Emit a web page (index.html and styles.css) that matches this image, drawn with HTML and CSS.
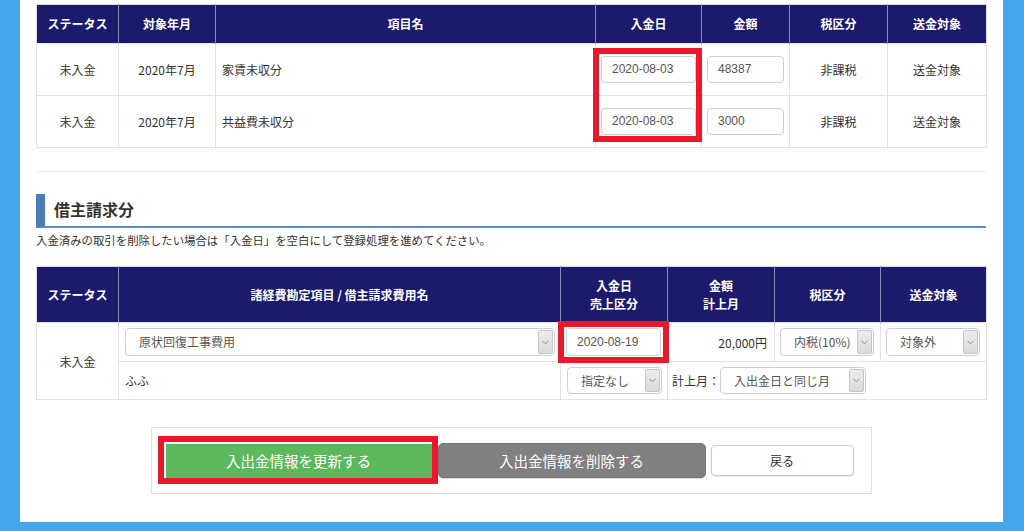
FILE: index.html
```html
<!DOCTYPE html>
<html lang="ja">
<head>
<meta charset="utf-8">
<title>入出金情報</title>
<link rel="stylesheet" href="styles.css">
</head>
<body>
<div class="panel">
  <div class="content">
    <table class="grid grid-top">
      <colgroup>
        <col class="c82"><col class="c97"><col class="c380"><col class="c106"><col class="c88"><col class="c98"><col class="c99">
      </colgroup>
      <thead>
        <tr><th>ステータス</th><th>対象年月</th><th>項目名</th><th>入金日</th><th>金額</th><th>税区分</th><th>送金対象</th></tr>
      </thead>
      <tbody>
        <tr>
          <td class="center">未入金</td>
          <td class="center">2020年7月</td>
          <td class="left">家賃未収分</td>
          <td class="pad5"><div class="field">2020-08-03</div></td>
          <td class="pad5"><div class="field">48387</div></td>
          <td class="center">非課税</td>
          <td class="center">送金対象</td>
        </tr>
        <tr>
          <td class="center">未入金</td>
          <td class="center">2020年7月</td>
          <td class="left">共益費未収分</td>
          <td class="pad5"><div class="field">2020-08-03</div></td>
          <td class="pad5"><div class="field">3000</div></td>
          <td class="center">非課税</td>
          <td class="center">送金対象</td>
        </tr>
      </tbody>
    </table>

    <div class="divider"></div>

    <h2 class="section-title">借主請求分</h2>
    <p class="note">入金済みの取引を削除したい場合は「入金日」を空白にして登録処理を進めてください。</p>

    <table class="grid grid-bottom">
      <colgroup>
        <col class="c82"><col class="c442"><col class="c107"><col class="c107"><col class="c106"><col class="c106">
      </colgroup>
      <thead>
        <tr><th>ステータス</th><th>諸経費勘定項目 / 借主請求費用名</th><th>入金日<br>売上区分</th><th>金額<br>計上月</th><th>税区分</th><th>送金対象</th></tr>
      </thead>
      <tbody>
        <tr class="r1">
          <td class="center" rowspan="2">未入金</td>
          <td class="pad-sel"><div class="sel"><span class="sel-text">原状回復工事費用</span><span class="sel-arrow"><svg width="7" height="5" viewBox="0 0 7 5"><polyline points="0.5,0.8 3.5,3.8 6.5,0.8" fill="none" stroke="#8a8a8a" stroke-width="1"/></svg></span></div></td>
          <td class="pad-sel"><div class="field tall">2020-08-19</div></td>
          <td class="right">20,000円</td>
          <td class="pad-sel"><div class="sel"><span class="sel-text">内税(10%)</span><span class="sel-arrow"><svg width="7" height="5" viewBox="0 0 7 5"><polyline points="0.5,0.8 3.5,3.8 6.5,0.8" fill="none" stroke="#8a8a8a" stroke-width="1"/></svg></span></div></td>
          <td class="pad-sel"><div class="sel"><span class="sel-text">対象外</span><span class="sel-arrow"><svg width="7" height="5" viewBox="0 0 7 5"><polyline points="0.5,0.8 3.5,3.8 6.5,0.8" fill="none" stroke="#8a8a8a" stroke-width="1"/></svg></span></div></td>
        </tr>
        <tr class="r2">
          <td class="left">ふふ</td>
          <td class="pad-sel"><div class="sel short"><span class="sel-text">指定なし</span><span class="sel-arrow"><svg width="7" height="5" viewBox="0 0 7 5"><polyline points="0.5,0.8 3.5,3.8 6.5,0.8" fill="none" stroke="#8a8a8a" stroke-width="1"/></svg></span></div></td>
          <td colspan="3" class="month-cell">
            <div class="month-row">
              <span class="month-label">計上月：</span>
              <div class="sel short month-sel"><span class="sel-text">入出金日と同じ月</span><span class="sel-arrow"><svg width="7" height="5" viewBox="0 0 7 5"><polyline points="0.5,0.8 3.5,3.8 6.5,0.8" fill="none" stroke="#8a8a8a" stroke-width="1"/></svg></span></div>
            </div>
          </td>
        </tr>
      </tbody>
    </table>

    <div class="actions">
      <button class="btn btn-update" type="button">入出金情報を更新する</button>
      <button class="btn btn-delete" type="button">入出金情報を削除する</button>
      <button class="btn btn-back" type="button">戻る</button>
    </div>
  </div>

  <div class="mark mark-dates"></div>
  <div class="mark mark-date2"></div>
  <div class="mark mark-update"></div>
</div>
</body>
</html>
```

FILE: styles.css
```css
html, body {
  margin: 0;
  padding: 0;
}

body {
  background: #42a8ea;
  font-family: "Noto Sans CJK JP", "Noto Sans", sans-serif;
  font-size: 12px;
  color: #333;
  height: 531px;
  overflow: hidden;
}

.panel {
  position: relative;
  margin-left: 20px;
  width: 983px;
  height: 522px;
  background: #fff;
}

.content {
  padding: 4px 0 0 16px;
  width: 950px;
}

/* tables */
.grid {
  width: 950px;
  border-collapse: collapse;
  table-layout: fixed;
  border: 1px solid #dedede;
}

.c82 { width: 82px; }
.c97 { width: 97px; }
.c380 { width: 380px; }
.c106 { width: 106px; }
.c88 { width: 88px; }
.c98 { width: 98px; }
.c99 { width: 99px; }
.c442 { width: 442px; }
.c107 { width: 107px; }

.grid th {
  background: #1c1a6c;
  color: #fff;
  font-weight: bold;
  font-size: 12px;
  text-align: center;
  border-left: 1px solid #8c8bb4;
  padding: 0;
  line-height: 18px;
}

.grid th:first-child {
  border-left: none;
}

.grid td {
  border: 1px solid #e2e2e2;
  padding: 0;
  vertical-align: middle;
}

.grid-top thead tr { height: 39px; }
.grid-top tbody tr { height: 52px; }

.grid-bottom thead tr { height: 56px; }
.grid-bottom .r1 { height: 39px; }
.grid-bottom .r2 { height: 38px; }

.center { text-align: center; }
.left { text-align: left; padding-left: 6px !important; }
.right { text-align: right; padding-right: 7px !important; }

.pad5 { padding: 0 5px !important; }
.pad-sel { padding: 0 6px 0 5px !important; }
.grid-bottom td.pad-sel:nth-child(2) { padding: 0 5px 0 6px !important; }

.field {
  box-sizing: border-box;
  height: 27px;
  border: 1px solid #d0d0d0;
  border-radius: 4px;
  padding-left: 10px;
  line-height: 25px;
  color: #555;
  font-family: "Liberation Sans", "Noto Sans CJK JP", sans-serif;
  font-size: 12px;
  background: #fff;
}

.field.tall {
  height: 28px;
  line-height: 26px;
}

/* custom selects */
.sel {
  box-sizing: border-box;
  display: flex;
  height: 28px;
  border: 1px solid #cfcfcf;
  border-radius: 4px;
  background: #fff;
}

.sel.short {
  height: 27px;
}

.sel-text {
  flex: 1;
  padding-left: 13px;
  line-height: 26px;
  color: #555;
  white-space: nowrap;
  overflow: hidden;
}

.sel.short .sel-text {
  line-height: 25px;
}

.sel-arrow {
  box-sizing: border-box;
  width: 15px;
  margin: 1px 1px 1px 0;
  background: linear-gradient(#ececec, #dadada);
  border: 1px solid #c6c6c6;
  border-radius: 2px;
  display: flex;
  align-items: center;
  justify-content: center;
}

.month-cell {
  padding: 0 0 0 4px !important;
}

.month-row {
  display: flex;
  align-items: center;
}

.month-label {
  width: 48px;
  color: #333;
}

.month-sel {
  width: 146px;
}

/* section */
.divider {
  height: 1px;
  background: #efefef;
  margin-top: 23px;
}

.section-title {
  box-sizing: border-box;
  margin: 22px 0 0 0;
  height: 34px;
  border-left: 9px solid #4a7eb3;
  border-bottom: 2px solid #5e8fc3;
  padding-left: 9px;
  font-size: 16px;
  font-weight: bold;
  line-height: 31px;
  color: #333;
}

.note {
  margin: 3px 0 0 0;
  line-height: 18px;
  font-size: 11.4px;
  color: #333;
}

.grid-bottom {
  margin-top: 17px;
}

/* buttons */
.actions {
  box-sizing: border-box;
  width: 721px;
  height: 67px;
  margin: 27px auto 0;
  border: 1px solid #e0e0e0;
  display: flex;
  align-items: center;
  padding: 0 0 0 14px;
}

.btn {
  box-sizing: border-box;
  font-family: "Noto Sans CJK JP", sans-serif;
  border-radius: 4px;
  padding: 0;
  cursor: pointer;
}

.btn-update {
  width: 266px;
  height: 34px;
  background: #5cb85c;
  border: 1px solid #5cb85c;
  color: #fff;
  font-size: 14.5px;
  border-radius: 0;
}

.btn-delete {
  width: 268px;
  height: 35px;
  margin-left: 6px;
  background: #808080;
  border: 1px solid #777;
  color: #fff;
  font-size: 14.5px;
  border-radius: 5px;
}

.btn-delete,
.btn-update {
  box-shadow: 0 1px 1px rgba(0, 0, 0, 0.15);
}

.btn-back {
  width: 143px;
  height: 31px;
  margin-left: 5px;
  background: #fff;
  border: 1px solid #cccccc;
  color: #333;
  font-size: 12px;
  box-shadow: 0 1px 1px rgba(0, 0, 0, 0.08);
}

/* red annotation boxes overlaid on the screenshot */
.mark {
  position: absolute;
  box-sizing: border-box;
  border: 6px solid #e8192c;
  pointer-events: none;
}

.mark-dates {
  left: 573px;
  top: 48px;
  width: 109px;
  height: 94px;
}

.mark-date2 {
  left: 538px;
  top: 321px;
  width: 111px;
  height: 42px;
}

.mark-update {
  left: 138px;
  top: 436px;
  width: 280px;
  height: 48px;
}
```
